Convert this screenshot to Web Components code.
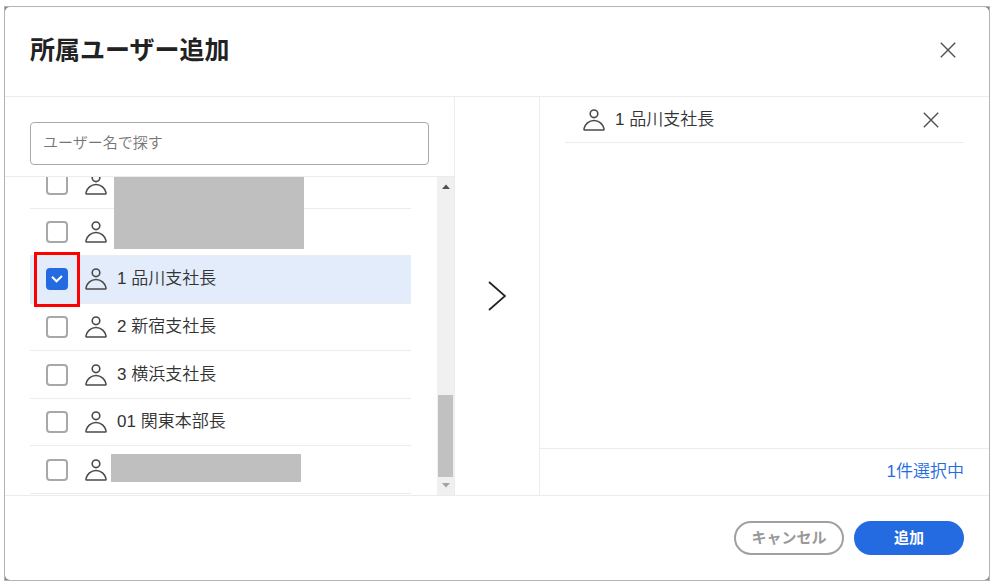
<!DOCTYPE html>
<html lang="ja">
<head>
<meta charset="utf-8">
<title>所属ユーザー追加</title>
<style>
  body {
    margin: 0;
    background: #fff;
    color: #333;
    font: 350 17px/24px "Liberation Sans", "Noto Sans CJK JP", sans-serif;
  }
</style>
</head>
<body>
<member-dialog>
  <h1 slot="title">所属ユーザー追加</h1>
  <search-box slot="source" placeholder="ユーザー名で探す"></search-box>
  <user-list slot="source">
    <user-row label="ユーザー A" masked></user-row>
    <user-row label="ユーザー B" masked></user-row>
    <user-row label="1 品川支社長" checked marked></user-row>
    <user-row label="2 新宿支社長"></user-row>
    <user-row label="3 横浜支社長"></user-row>
    <user-row label="01 関東本部長"></user-row>
    <user-row label="ユーザー C" masked></user-row>
  </user-list>
  <picked-user slot="picked">1 品川支社長</picked-user>
  <span slot="count">1件選択中</span>
  <pill-button slot="actions">キャンセル</pill-button>
  <pill-button slot="actions" primary>追加</pill-button>
</member-dialog>

<script>
const define = (name, html, setup) => {
  const template = document.createElement('template');
  template.innerHTML = '<style>*{box-sizing:border-box}</style>' + html;
  customElements.define(name, class extends HTMLElement {
    connectedCallback() {
      if (this.shadowRoot) return;
      const root = this.attachShadow({ mode: 'open' });
      root.append(template.content.cloneNode(true));
      if (setup) setup(this, root);
    }
  });
};

define('person-icon', `
  <style>
    :host { display: block; flex: none; width: 22px; height: 22px; }
    svg { display: block; fill: none; stroke: #4a4a4a; stroke-width: 1.6; stroke-linejoin: round; }
  </style>
  <svg width="22" height="22" viewBox="0 0 22 22" aria-hidden="true">
    <circle cx="11" cy="4.800" r="3.8"/>
    <path d="M2 21h18c.8 0 1.2-.5 1-1.3C20 15.100 16 11.500 11 11.500S2 15.100 1 19.700c-.2.8.2 1.300 1 1.300z"/>
  </svg>`);

define('close-button', `
  <style>
    :host { display: block; flex: none; }
    button { display: block; padding: 4px; border: 0; background: none; }
    svg { display: block; fill: none; stroke: #505050; stroke-width: 1.4; }
  </style>
  <button type="button" aria-label="閉じる">
    <svg width="16" height="16" viewBox="0 0 16 16"><path d="M.8.8l14.400 14.400M15.200.8L.8 15.200"/></svg>
  </button>`);

define('search-box', `
  <style>
    :host { display: block; padding: 25px 25px 11px; border-bottom: 1px solid #ececec; }
    input {
      display: block; width: 100%; height: 43px; padding: 0 12px 3px;
      border: 1px solid #aaa; border-radius: 4px; background: #fff;
      font: inherit; font-size: 15px; color: #333; outline: 0;
    }
    input::placeholder { color: #757575; opacity: 1; }
  </style>
  <input type="search" aria-label="ユーザー名で探す">`,
  (host, root) => { root.querySelector('input').placeholder = host.getAttribute('placeholder'); });

define('user-list', `
  <style>
    :host { display: flex; flex: 1; overflow: hidden; position: relative; }
    .rows { flex: 1; display: flex; flex-direction: column; margin: -16px 26px 1px 25px; }
    .bar {
      width: 17px; padding: 7px 1px; background: #f0f0f0;
      display: flex; flex-direction: column; align-items: center;
    }
    .space { flex: 1; }
    .thumb { width: 15px; height: 82px; margin-bottom: 6px; background: #c1c1c1; }
    svg { display: block; }
    .mask { position: absolute; width: 190px; background: #bfbfbf; }
    .upper { left: 109px; top: 0; height: 72px; }
    .lower { left: 106px; bottom: 13px; height: 28px; }
  </style>
  <div class="rows"><slot></slot></div>
  <div class="bar" aria-hidden="true">
    <svg width="8" height="5"><path d="M0 5L4 .5 8 5z" fill="#505050"/></svg>
    <div class="space"></div>
    <div class="thumb"></div>
    <svg width="8" height="5"><path d="M0 0h8L4 4.500z" fill="#a3a3a3"/></svg>
  </div>
  <div class="mask upper"></div>
  <div class="mask lower"></div>`);

define('user-row', `
  <style>
    :host { display: flex; flex: 1; border-bottom: 1px solid #ececec; }
    :host([checked]) { background: #e2ecfb; }
    label { flex: 1; display: flex; align-items: center; padding-left: 16px; }
    .tick { display: block; position: relative; width: 22px; height: 22px; margin-right: 17px; }
    input {
      appearance: none; display: block; width: 22px; height: 22px; margin: 0;
      border: 2px solid #a8a8a8; border-radius: 4px; background: #fff;
    }
    input:checked { border-color: #246be1; background: #246be1; }
    .tick svg { position: absolute; inset: 0; display: none; pointer-events: none; }
    input:checked + svg { display: block; }
    .mark { position: absolute; inset: -16px -12px -17px; border: 3px solid #f00; display: none; }
    :host([marked]) .mark { display: block; }
    .name { padding-left: 10px; }
  </style>
  <label>
    <span class="tick">
      <input type="checkbox">
      <svg width="22" height="22" viewBox="0 0 22 22" fill="none" stroke="#fff" stroke-width="2"><path d="M6 8.800l4.500 4.500L16 8.100"/></svg>
      <span class="mark"></span>
    </span>
    <person-icon></person-icon>
    <span class="name"></span>
  </label>`,
  (host, root) => {
    const input = root.querySelector('input');
    input.checked = host.hasAttribute('checked');
    input.addEventListener('change', () => host.toggleAttribute('checked', input.checked));
    if (host.hasAttribute('masked')) input.setAttribute('aria-label', host.getAttribute('label'));
    else root.querySelector('.name').textContent = host.getAttribute('label');
  });

define('picked-user', `
  <style>
    :host {
      display: flex; align-items: center; gap: 10px; height: 46px; box-sizing: border-box;
      margin: 0 25px; padding: 0 21px 0 18px; border-bottom: 1px solid #ececec;
    }
    .name { flex: 1; }
  </style>
  <person-icon></person-icon>
  <span class="name"><slot></slot></span>
  <close-button></close-button>`);

define('pill-button', `
  <style>
    :host { display: block; }
    button {
      display: block; min-width: 110px; height: 34px; padding: 0 12px;
      border: 2px solid #a0a0a0; border-radius: 17px; background: #fff;
      font: inherit; font-size: 15px; font-weight: 700; color: #999;
    }
    :host([primary]) button { border-color: #246be1; background: #246be1; color: #fff; }
  </style>
  <button type="button"><slot></slot></button>`);

define('member-dialog', `
  <style>
    :host { display: flex; min-height: 100vh; box-sizing: border-box; padding: 6px 4px; }
    .frame { flex: 1; display: flex; border: 1px solid #b4b4b4; background: #888; }
    section { flex: 1; display: flex; flex-direction: column; border-radius: 5px; background: #fff; }
    header {
      display: flex; align-items: center; justify-content: space-between;
      height: 90px; padding: 0 29px 3px 25px; border-bottom: 1px solid #ececec;
    }
    ::slotted(h1) { margin: 0; font-size: 25px; line-height: 36px; font-weight: 700; color: #222; }
    .body { flex: 1; display: grid; grid-template-columns: 1fr 84px 1fr; }
    .source { display: flex; flex-direction: column; min-width: 0; border-right: 1px solid #ececec; }
    .move { display: flex; align-items: center; justify-content: center; }
    .move button { display: block; padding: 0; border: 0; background: none; }
    .move svg { display: block; fill: none; stroke: #222; stroke-width: 1.7; }
    .picked { display: flex; flex-direction: column; min-width: 0; border-left: 1px solid #ececec; }
    .users { flex: 1; }
    .count {
      display: flex; align-items: center; justify-content: flex-end; height: 47px;
      padding: 0 25px; border-top: 1px solid #ececec; color: #246be1;
    }
    footer {
      display: flex; align-items: center; justify-content: flex-end; gap: 10px;
      height: 85px; padding: 0 25px; border-top: 1px solid #ececec;
    }
  </style>
  <div class="frame">
    <section role="dialog" aria-label="所属ユーザー追加">
      <header><slot name="title"></slot><close-button></close-button></header>
      <div class="body">
        <div class="source"><slot name="source"></slot></div>
        <div class="move">
          <button type="button" aria-label="選択したユーザーを移動">
            <svg width="18" height="30" viewBox="0 0 18 30"><path d="M1 1l16 14L1 29"/></svg>
          </button>
        </div>
        <div class="picked">
          <div class="users"><slot name="picked"></slot></div>
          <div class="count"><slot name="count"></slot></div>
        </div>
      </div>
      <footer><slot name="actions"></slot></footer>
    </section>
  </div>`);
</script>
</body>
</html>
